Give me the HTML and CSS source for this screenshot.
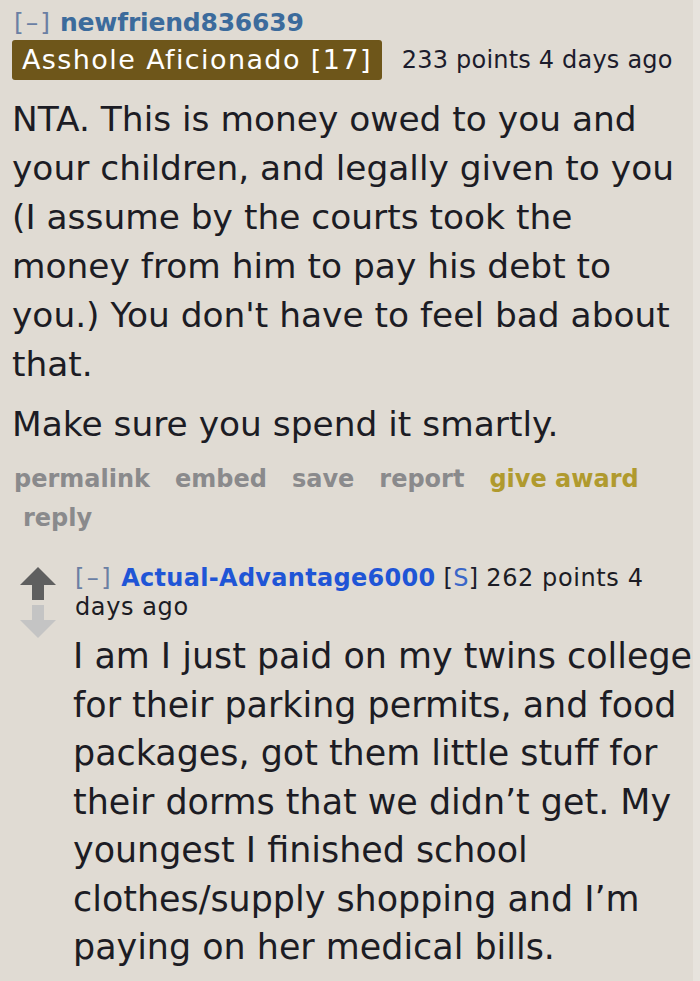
FILE: index.html
```html
<!DOCTYPE html>
<html lang="en">
<head>
<meta charset="utf-8">
<title>Comment</title>
<link rel="stylesheet" href="styles.css">
</head>
<body>
<div class="page">
  <div class="comment">
    <div class="tagline">
      <span class="expand">[–]</span>
      <span class="author">newfriend836639</span>
    </div>
    <div class="flair-row">
      <span class="flair">Asshole Aficionado [17]</span>
      <span class="meta">233 points 4 days ago</span>
    </div>
    <div class="md">
      <p>NTA. This is money owed to you and your children, and legally given to you (I assume by the courts took the money from him to pay his debt to you.) You don't have to feel bad about that.</p>
      <p>Make sure you spend it smartly.</p>
    </div>
    <ul class="buttons">
      <li>permalink</li>
      <li>embed</li>
      <li>save</li>
      <li>report</li>
      <li class="award">give award</li>
      <li class="reply">reply</li>
    </ul>

    <div class="child">
      <div class="arrows">
        <svg class="arrow" width="38" height="36" viewBox="0 0 38 36"><path d="M19 1 L37 19 L25 19 L25 34 L13 34 L13 19 L1 19 Z" fill="#5f5f5f"/></svg>
        <svg class="arrow" width="38" height="36" viewBox="0 0 38 36"><path d="M13 1 L25 1 L25 16 L37 16 L19 34 L1 16 L13 16 Z" fill="#c4c4c4"/></svg>
      </div>
      <div class="child-entry">
        <div class="child-tagline">
          <span class="expand">[–]</span> <span class="child-author">Actual-Advantage6000</span> <span class="sub">[<span class="s">S</span>]</span> <span class="score">262 points 4 days ago</span>
        </div>
        <div class="md child-md">
          <p>I am I just paid on my twins college for their parking permits, and food packages, got them little stuff for their dorms that we didn’t get. My youngest I finished school clothes/supply shopping and I’m paying on her medical bills.</p>
        </div>
      </div>
    </div>
  </div>
</div>
</body>
</html>
```
FILE: styles.css
```css
html {
  background: #e7e3dd;
}
body {
  margin: 0;
  font-family: "DejaVu Sans", Verdana, sans-serif;
  color: #1c1c24;
}
.page {
  width: 693px;
  min-height: 981px;
  background: #e0dbd3;
}
.comment {
  padding: 8px 0 0 12px;
}
.tagline {
  font-size: 25px;
  line-height: 30px;
}
.expand {
  color: #6b7fa3;
  font-weight: normal;
}
.tagline .expand {
  padding-left: 2px;
  letter-spacing: 2px;
}
.author {
  color: #3c6b9c;
  font-weight: bold;
  letter-spacing: -0.2px;
}
.flair-row {
  display: flex;
  align-items: center;
  gap: 20px;
  margin-top: 2px;
}
.flair {
  background: #6e561a;
  color: #ffffff;
  font-size: 27px;
  letter-spacing: 1.4px;
  line-height: 40px;
  padding: 0 10px;
  border-radius: 3px;
}
.meta {
  font-size: 24px;
  letter-spacing: 0.2px;
  color: #1c1c2c;
}
.md p {
  font-size: 34.4px;
  line-height: 49px;
  margin: 0 0 11px;
}
.md {
  margin-top: 15px;
  width: 681px;
}
.buttons {
  list-style: none;
  margin: 0;
  padding: 0 0 0 2px;
  display: flex;
  flex-wrap: wrap;
  width: 660px;
  font-size: 24px;
  line-height: 39px;
  font-weight: bold;
  color: #8a8a8c;
}
.buttons li {
  margin-right: 25px;
}
.buttons .award {
  color: #b09a2e;
}
.buttons .reply {
  padding-left: 9px;
}
.child {
  display: flex;
  margin-top: 28px;
}
.arrows {
  display: flex;
  flex-direction: column;
  gap: 2px;
  width: 54px;
  padding-left: 7px;
  flex-shrink: 0;
}
.child-entry {
  flex: 1;
}
.child-tagline {
  font-size: 24px;
  letter-spacing: 0.3px;
  line-height: 29px;
  padding-left: 2px;
  margin-top: -2px;
}
.child-tagline .expand {
  letter-spacing: 2.5px;
}
.child-author {
  color: #1f55d6;
  font-weight: bold;
}
.sub {
  color: #1c1c2c;
}
.sub .s {
  color: #3a66c8;
}
.score {
  letter-spacing: 0.6px;
}
.child-md {
  margin-top: 10px;
  width: 626px;
}
.child-md p {
  font-size: 34.9px;
  line-height: 48.5px;
}
```
